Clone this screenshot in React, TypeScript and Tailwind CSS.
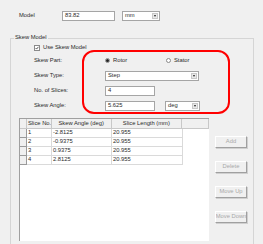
import { ReactNode } from "react";

function Input({ value, className = "" }: { value: string; className?: string }) {
    return (
        <div className={`flex h-[10px] items-center border border-[#a5a5a5] bg-white pl-[2px] ${className}`}>
            {value}
        </div>
    );
}

function Select({ value, className = "" }: { value: string; className?: string }) {
    return (
        <div className={`flex h-[10px] items-center justify-between border border-[#a5a5a5] bg-white pl-[2px] ${className}`}>
            <span>{value}</span>
            <span className="m-[1px] flex h-[6px] w-[6px] items-center justify-center border border-[#c8c8c8] bg-[#e8e8e8]">
                <span className="h-0 w-0 border-x-[1.5px] border-t-[2px] border-x-transparent border-t-[#222]" />
            </span>
        </div>
    );
}

function Row({ label, children, className = "" }: { label: string; children: ReactNode; className?: string }) {
    return (
        <div className={`flex items-center ${className}`}>
            <div className="w-[71px]">{label}</div>
            {children}
        </div>
    );
}

function Radio({ label, checked }: { label: string; checked?: boolean }) {
    return (
        <div className="flex items-center gap-[3px]">
            <span className="flex h-[5px] w-[5px] items-center justify-center rounded-full border border-[#8a8a8a] bg-white">
                {checked && <span className="h-[3px] w-[3px] rounded-full bg-[#222]" />}
            </span>
            <span>{label}</span>
        </div>
    );
}

function Button({ label }: { label: string }) {
    return (
        <div className="flex h-[12px] w-[32px] items-center justify-center overflow-hidden border border-t-white border-l-white border-r-[#a0a0a0] border-b-[#a0a0a0] bg-[#f0f0f0] text-[#a8a8a8] shadow-[1px_1px_0_#d0d0d0]">
            {label}
        </div>
    );
}

const rows = [
    ["1", "-2.8125", "20.955"],
    ["2", "-0.9375", "20.955"],
    ["3", "0.9375", "20.955"],
    ["4", "2.8125", "20.955"],
];

export default function App() {
    return (
        <div className="relative h-[244px] w-[263px] overflow-hidden whitespace-nowrap bg-[#f0f0f0] pt-[11px] font-['Liberation_Sans',Arial,sans-serif] text-[5.8px] leading-none text-[#2a2a2a]">
            <div className="flex h-[10px] items-center pl-[19px]">
                <div className="w-[43px]">Model</div>
                <Input value="83.82" className="w-[53px]" />
                <Select value="mm" className="ml-[7px] w-[38px]" />
            </div>

            <div className="ml-[10px] mt-[17px] h-[230px] w-[244px] border border-[#d5d5d5]">
                <div className="-mt-[5px] ml-[3px] flex h-[8px] w-fit items-center bg-[#f0f0f0] px-[1px]">
                    Skew Model
                </div>

                <div className="pl-[23px]">
                    <div className="mt-[2px] flex h-[8px] items-center gap-[3px]">
                        <span className="flex h-[6px] w-[6px] items-center justify-center border border-[#8a8a8a] bg-white">
                            <svg viewBox="0 0 6 6" className="h-[4px] w-[4px]">
                                <path d="M0.8 3 L2.4 4.6 L5.2 1.2" fill="none" stroke="#222" strokeWidth="1.1" />
                            </svg>
                        </span>
                        <span>Use Skew Model</span>
                    </div>

                    <Row label="Skew Part:" className="mt-[4px] h-[10px]">
                        <div className="w-[61px]">
                            <Radio label="Rotor" checked />
                        </div>
                        <Radio label="Stator" />
                    </Row>
                    <Row label="Skew Type:" className="mt-[5px]">
                        <Select value="Step" className="w-[94px]" />
                    </Row>
                    <Row label="No. of Slices:" className="mt-[5px]">
                        <Input value="4" className="w-[50px]" />
                    </Row>
                    <Row label="Skew Angle:" className="mt-[5px]">
                        <Input value="5.625" className="w-[50px]" />
                        <Select value="deg" className="ml-[10px] w-[35px]" />
                    </Row>
                </div>

                <div className="mt-[7px] flex gap-[6px] pl-[8px]">
                    <div className="h-[123px] w-[190px] border-l border-t border-[#a0a0a0] bg-white">
                        <div className="flex h-[10px] bg-[#f0f0f0]">
                            <div className="w-[7px] border-b border-r border-[#c8c8c8]" />
                            <div className="flex w-[25px] items-center overflow-hidden border-b border-r border-[#c8c8c8] pl-[1px]">Slice No.</div>
                            <div className="flex w-[60px] items-center justify-center border-b border-r border-[#c8c8c8]">Skew Angle (deg)</div>
                            <div className="flex w-[71px] items-center justify-center border-b border-r border-[#c8c8c8]">Slice Length (mm)</div>
                            <div className="w-[27px] border-b border-r border-[#c8c8c8]" />
                        </div>
                        {rows.map((r) => (
                            <div key={r[0]} className="flex h-[9px]">
                                <div className="w-[7px] border-b border-r border-[#9a9a9a] bg-[#f0f0f0]" />
                                <div className="flex w-[25px] items-center border-b border-r border-[#dadada] pl-[1px]">{r[0]}</div>
                                <div className="flex w-[60px] items-center border-b border-r border-[#dadada] pl-[1px]">{r[1]}</div>
                                <div className="flex w-[71px] items-center border-b border-r border-[#dadada] pl-[1px]">{r[2]}</div>
                            </div>
                        ))}
                    </div>

                    <div className="flex flex-col gap-[13px] pt-[18px]">
                        <Button label="Add" />
                        <Button label="Delete" />
                        <Button label="Move Up" />
                        <Button label="Move Down" />
                    </div>
                </div>
            </div>

            <div className="absolute left-[82px] top-[50px] h-[64px] w-[148px] rounded-[12px] border-[2.5px] border-[#ff0000]" />
        </div>
    );
}
